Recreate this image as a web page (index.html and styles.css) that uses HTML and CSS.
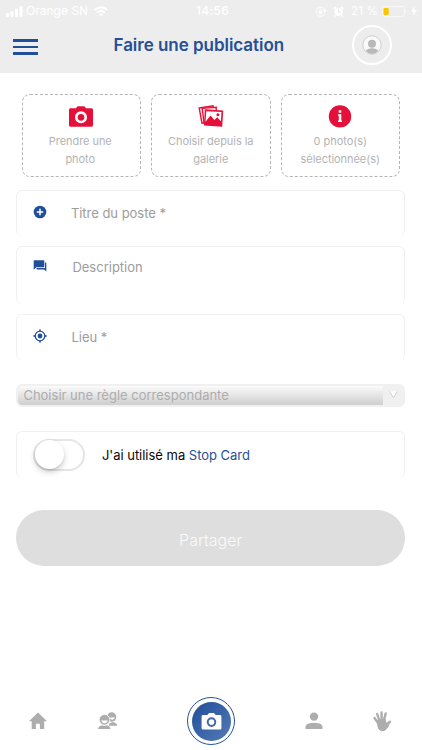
FILE: index.html
```html
<!DOCTYPE html>
<html lang="fr">
<head>
<meta charset="utf-8">
<title>Faire une publication</title>
<link rel="stylesheet" href="styles.css">
</head>
<body>
<main class="screen">
  <header class="header">
    <div class="status">
      <div class="status-left">
        <svg width="17" height="11" viewBox="0 0 17 11" fill="#fff"><rect y="7" width="3" height="4" rx=".8"/><rect x="4.5" y="5" width="3" height="6" rx=".8"/><rect x="9" y="2.7" width="3" height="8.3" rx=".8"/><rect x="13.5" width="3" height="11" rx=".8"/></svg>
        <span class="carrier">Orange SN</span>
        <svg width="14" height="11" viewBox="0 0 14 11" fill="none" stroke="#fff" stroke-width="1.9"><path d="M.7 4.1Q7-1.8 13.3 4.1M3 6.6q4-3.7 8 0"/><path d="M4.9 8.3Q7 6.3 9.1 8.3L7 10.6z" fill="#fff" stroke="none"/></svg>
      </div>
      <span class="clock">14:56</span>
      <div class="status-right">
        <svg width="12" height="11" viewBox="0 0 12 11" fill="none" stroke="#fff"><path d="M9.7 7.7A4.6 4.6 0 1 1 9.8 4M8.2 4.4h3L9.8 6.3z"/><rect x="3.5" y="5" width="3.6" height="2.8" fill="#fff" stroke="none"/><path d="M4.3 5V3.8q1-1.4 2 0V5" stroke-width=".8"/></svg>
        <svg class="alarm" width="11" height="11" viewBox="0 0 11 11"><circle cx="5.5" cy="5.9" r="4.2" fill="#fff"/><path d="M.8 3 3 1M10.2 3 8 1M2.5 9.2l-1 1.3M8.5 9.2l1 1.3" stroke="#fff" stroke-width="1.7"/><path d="M5.5 3.5V6h2" fill="none" stroke="#ddd" stroke-width=".8"/></svg>
        <span class="percent">21 %</span>
        <svg class="battery" width="25" height="11" viewBox="0 0 25 11"><rect x=".5" y=".5" width="22" height="10" rx="2.6" fill="none" stroke="#f8f8f8"/><rect x="1.5" y="2" width="5.2" height="7" rx="1" fill="#fdc500"/><path d="M23.8 4v3.2" stroke="#f8f8f8"/></svg>
        <svg class="bolt" width="6" height="10" viewBox="0 0 6 10"><path d="M3.8 0 0 5.6h2.5L1.7 10 6 4H3.4z" fill="#fff"/></svg>
      </div>
    </div>
    <div class="titlebar">
      <button class="menu" aria-label="Menu"><i></i><i></i><i></i></button>
      <h1>Faire une publication</h1>
      <div class="avatar">
        <svg width="20" height="20" viewBox="0 0 20 20"><circle cx="10" cy="10" r="9.2" fill="#fafafa" stroke="#c4c4c4" stroke-width=".8"/><circle cx="10" cy="8.7" r="4" fill="#b9b9b9"/><path d="M3.6 15.8Q6 12.9 10 13.3q4-.4 6.4 2.5Q13.8 18.9 10 18.9t-6.4-3.1z" fill="#b9b9b9"/></svg>
      </div>
    </div>
  </header>

  <section class="choices">
    <div class="choice">
      <svg width="26" height="26" viewBox="0 0 26 26"><path d="M2.4 4.2H8l1.6-2h6.8l1.6 2h5.6Q25 4.2 25 5.7v15.6q0 1.4-1.4 1.4H2.4Q1 22.7 1 21.3V5.7q0-1.5 1.4-1.5z" fill="#e4103a"/><circle cx="13" cy="13.3" r="4.7" fill="none" stroke="#fff" stroke-width="2.7"/></svg>
      <span>Prendre une<br>photo</span>
    </div>
    <div class="choice">
      <svg width="26" height="26" viewBox="0 0 26 26"><g fill="#fff" stroke="#e4103a" stroke-width="1.4"><path d="M1.2 4 15 1.9l2 15L4 19.2z"/><path d="m4.2 4.4 14-1.2v15L6 19z"/></g><path d="m6.8 5.3 18.4 1.1-1 16.3L6 21.5z" fill="#e4103a"/><path d="m8.3 7.2 15.2.9-.6 9.2-3.7-4-2.8 2.6-3.9-4.3-5 6.2z" fill="#fff"/><circle cx="19.9" cy="10.8" r="1.5" fill="#e4103a"/></svg>
      <span>Choisir depuis la<br>galerie</span>
    </div>
    <div class="choice">
      <svg width="26" height="26" viewBox="0 0 26 26"><circle cx="13" cy="12.4" r="11.2" fill="#e4103a"/><path d="M11.7 6.3h2.6v2.5h-2.6zm-.7 4h3.3v6.2h.6v1.4H11v-1.4h.8v-4.8H11z" fill="#fff"/></svg>
      <span>0 photo(s)<br>sélectionnée(s)</span>
    </div>
  </section>

  <section class="form">
    <div class="field title-field">
      <svg width="14" height="14" viewBox="0 0 14 14"><circle cx="7" cy="7" r="6.3" fill="#204e9a"/><path d="M7 3.8v6.4M3.8 7h6.4" stroke="#fff" stroke-width="1.5"/></svg>
      <span>Titre du poste *</span>
    </div>
    <div class="field description-field">
      <svg width="14" height="14" viewBox="0 0 14 14" fill="#204e9a"><path d="M1.4 1.2h9.2q.7 0 .7.7v5.6q0 .7-.7.7H3.3L.7 10.7V1.9q0-.7.7-.7z"/><path d="M12 3.6h.6q.7 0 .7.7v8.2L11 10.5H4.2q-.7 0-.7-.7V9H12z"/></svg>
      <span>Description</span>
    </div>
    <div class="field place-field">
      <svg width="14" height="14" viewBox="0 0 14 14" fill="none" stroke="#204e9a" stroke-width="1.3"><circle cx="7" cy="7" r="4.8"/><path d="M7 .3v2M7 11.7v2M.3 7h2M11.7 7h2"/><circle cx="7" cy="7" r="2.4" fill="#204e9a" stroke="none"/></svg>
      <span>Lieu *</span>
    </div>
    <div class="select">
      <span>Choisir une règle correspondante</span>
      <div class="arrow"><svg width="9" height="8" viewBox="0 0 9 8"><path d="M.7.5h7.6L4.5 7z" fill="#fff"/><path d="m.7.5 3.8 6.5L8.3.5" fill="none" stroke="#ccc" stroke-width=".8"/></svg></div>
    </div>
    <div class="field stop-field">
      <div class="toggle"><div class="knob"></div></div>
      <p>J'ai utilisé ma <a>Stop Card</a></p>
    </div>
    <button class="share"><span>Partager</span></button>
  </section>

  <nav class="tabs">
    <div class="tab"><svg width="18" height="18" viewBox="0 0 18 18" fill="#adadad"><path d="M9 .5 0 9.2h2.7V17h4.2v-5.3h4V17h4.3V9.2H18z"/></svg></div>
    <div class="tab"><svg width="20" height="18" viewBox="0 0 20 18" fill="#adadad"><circle cx="13.6" cy="5" r="4.7"/><path d="M11 13.7v-2l3.5-1.6q4 .8 4.8 3.6z"/><path d="M11.8 5.4q2.6.5 5-.4-.3 2.5-2.7 2.7-1.8-.2-2.3-2.3z" fill="#fff"/><circle cx="6.5" cy="7.7" r="5.3" stroke="#fff" stroke-width=".8"/><path d="M3.4 8.3q3.3.6 6.2 0-.3 2.9-3.1 2.9T3.4 8.3z" fill="#fff"/><path d="M0 17q.4-2.8 4-3.7l2.5.7 2.5-.7q3.3.9 3.5 3.7z"/></svg></div>
    <div class="camera"><div class="camera-core">
      <svg width="21" height="19" viewBox="0 0 21 19"><path d="M2 3h4.4L8 1h5l1.6 2H19q1.4 0 1.4 1.4v11.8q0 1.3-1.4 1.3H2q-1.4 0-1.4-1.3V4.4Q.6 3 2 3z" fill="#fff"/><circle cx="10.5" cy="10.1" r="3.8" fill="none" stroke="#4268a9" stroke-width="2"/></svg>
    </div></div>
    <div class="tab"><svg width="18" height="18" viewBox="0 0 18 18" fill="#adadad"><circle cx="9" cy="4.6" r="4.2"/><path d="M.5 17v-2q0-2.8 4.3-3.8 4.2-.9 8.4 0 4.3 1 4.3 3.8v2z"/></svg></div>
    <div class="tab"><svg width="19" height="21" viewBox="0 0 19 21" fill="none" stroke="#adadad" stroke-linecap="round"><path d="M5.1 12 1.5 7M6.5 10 4.2 3M8.7 10 8.5 1.5M10.7 10l2-7.6M12.6 14l4.4-3.3" stroke-width="2.4"/><path d="M4.3 9.6 12 8l1.4 5.1 3.1-1.5q-1.2 4.8-4.2 7.4-4 2-6.4-.8-1.5-3-1.6-8.6z" fill="#adadad" stroke-width="1"/></svg></div>
  </nav>
</main>
</body>
</html>
```
FILE: styles.css
```css
* { box-sizing: border-box; }
body { margin: 0; background: #fff; font-family: Inter, "Liberation Sans", sans-serif; }
svg { display: block; flex-shrink: 0; }
button { border: 0; padding: 0; font: inherit; }
.screen { width: 422px; height: 750px; display: flex; flex-direction: column; overflow: hidden; }

.header { height: 72.5px; background: #ededed; flex-shrink: 0; }
.status { height: 22px; padding: 0 5px 0 6px; display: grid; grid-template-columns: 1fr auto 1fr; align-items: center; color: #fff; font-size: 12px; line-height: 22px; }
.status-left, .status-right { display: flex; align-items: center; }
.status-right { justify-content: flex-end; }
.carrier { margin: 0 6px 0 3px; letter-spacing: .02px; }
.clock { margin-left: 2px; font-weight: 500; letter-spacing: .35px; }
.alarm { margin-left: 6px; }
.percent { margin: 0 4px 0 7px; letter-spacing: -.1px; }
.bolt { margin-left: 4px; }
.titlebar { height: 46px; padding: 0 30px 0 13px; display: flex; align-items: center; }
.menu { width: 25px; display: flex; flex-direction: column; gap: 4px; background: none; margin-top: 4px; }
.menu i { height: 2.6px; background: #204e9a; }
h1 { flex: 1; margin: 0 0 0 75.5px; color: #264f96; font-size: 17px; font-weight: 600; line-height: 22px; letter-spacing: -.03px; white-space: nowrap; }
.avatar { width: 40px; height: 40px; border: 2px solid #fff; border-radius: 50%; display: grid; place-items: center; }

.choices { display: grid; grid-template-columns: repeat(3, 119.5px); gap: 10px; margin: 21.5px 0 0 21.5px; }
.choice { height: 82.5px; padding-top: 9px; border: 1.3px dashed #b5b5b5; border-radius: 8px; display: flex; flex-direction: column; align-items: center; color: #b3b3b3; font-size: 11px; line-height: 18px; text-align: center; white-space: nowrap; }
.choice span { margin-top: 2px; letter-spacing: -.05px; }
.choice:first-child span { margin-right: 2px; }

.form { padding: 0 17px 0 16.4px; }
.field { display: flex; align-items: flex-start; border: 1.5px solid #f0f0f0; border-bottom: 0; border-radius: 6px; color: #9c9c9c; font-size: 13px; line-height: 18px; }
.field > svg { margin-left: 15.5px; }
.title-field { height: 46px; margin-top: 13px; padding-top: 13px; }
.title-field svg { margin-top: 1px; }
.title-field span { margin-left: 24px; letter-spacing: -.03px; }
.description-field { height: 58px; margin-top: 10px; padding-top: 11px; }
.description-field svg { margin-top: 1px; }
.description-field span { margin-left: 25.5px; }
.place-field { height: 46px; margin-top: 10px; padding-top: 13px; }
.place-field svg { margin-top: 1px; }
.place-field span { margin-left: 24.5px; }
.select { height: 23px; margin-top: 24px; border: 2px solid #f0f0f0; border-radius: 6px; display: flex; overflow: hidden; background: linear-gradient(#fbfbfb, #cecece) padding-box; color: #adadad; font-size: 13px; line-height: 19px; }
.select > span { flex: 1; padding-left: 5px; }
.arrow { width: 20px; background: #f0f0f0; display: grid; place-items: center; }
.stop-field { height: 47px; margin-top: 24px; padding: 7px 0 0 16px; }
.toggle { width: 52px; height: 32px; border: 2px solid #e5e5e5; border-radius: 16px; }
.knob { width: 29px; height: 29px; margin: -.5px 0 0 -.5px; border-radius: 50%; background: #fff; box-shadow: 0 3px 6px rgba(0,0,0,.2), 0 1px 1px rgba(0,0,0,.1); }
.stop-field p { margin: 7px 0 0 16.5px; color: #080808; font-size: 13px; letter-spacing: -.02px; }
.stop-field a { color: #264f96; }
.share { display: block; width: 100%; height: 56px; margin-top: 32px; border-radius: 28px; background: #dedede; color: #fafafa; font-size: 16px; font-weight: 300; line-height: 22px; padding-top: 5px; }

.tabs { height: 48px; margin: auto 0 5px; display: grid; grid-template-columns: 76px 63px 144px 62px 75px; place-items: center; }
.camera { width: 48px; height: 48px; border: 1.3px solid #28539c; border-radius: 50%; display: grid; place-items: center; }
.camera-core { width: 39px; height: 39px; border-radius: 50%; background: linear-gradient(135deg, #204e9a, #557bb5); display: grid; place-items: center; }
```
